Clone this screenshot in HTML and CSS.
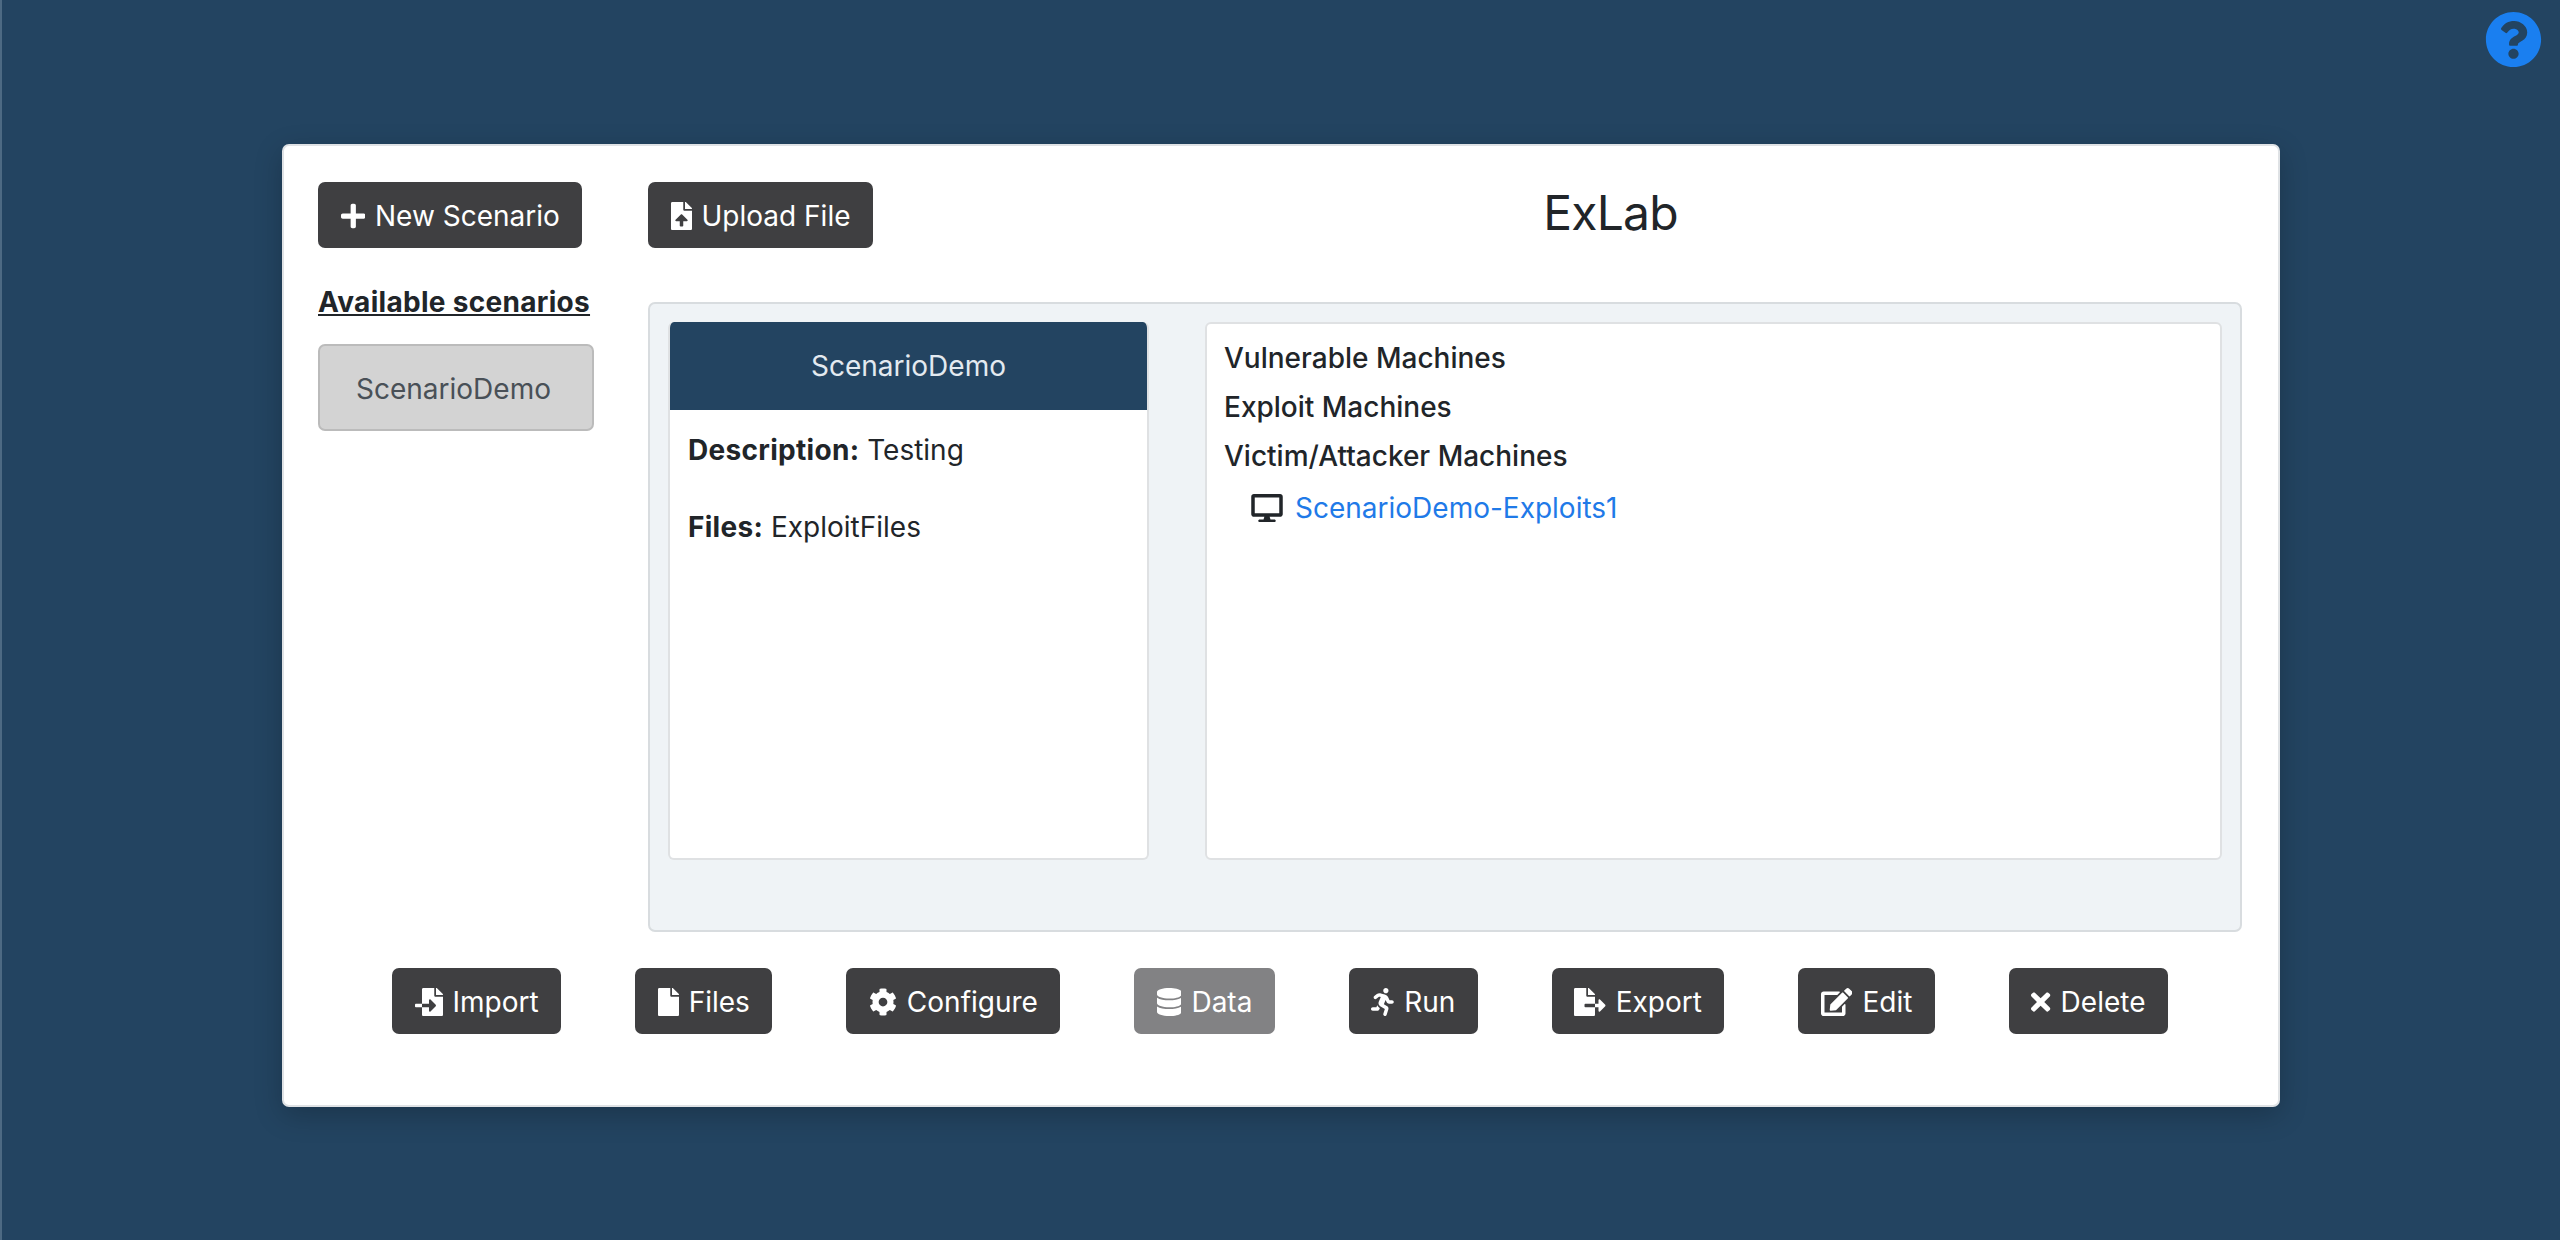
FILE: index.html
```html
<!DOCTYPE html>
<html lang="en">
<head>
    <meta charset="UTF-8">
    <title>ExLab</title>
    <link rel="stylesheet" href="styles.css">
</head>
<body>
    <a class="help" href="#">
        <svg viewBox="0 0 512 512"><path d="M504 256c0 136.997-111.043 248-248 248S8 392.997 8 256C8 119.083 119.043 8 256 8s248 111.083 248 248zM262.655 90c-54.497 0-89.255 22.957-116.549 63.758-3.536 5.286-2.353 12.415 2.715 16.258l34.699 26.31c5.205 3.947 12.621 3.008 16.665-2.122 17.864-22.658 30.113-35.797 57.303-35.797 20.429 0 45.698 13.148 45.698 32.958 0 14.976-12.363 22.667-32.534 33.976C247.128 238.528 216 254.941 216 296v4c0 6.627 5.373 12 12 12h56c6.627 0 12-5.373 12-12v-1.333c0-28.462 83.186-29.647 83.186-106.667 0-58.002-60.165-102-116.531-102zM256 338c-25.365 0-46 20.635-46 46 0 25.364 20.635 46 46 46s46-20.636 46-46c0-25.365-20.635-46-46-46z"/></svg>
    </a>

    <div class="main-card">
        <div class="columns">
            <div class="sidebar">
                <button class="btn" type="button">
                    <svg class="icon" viewBox="0 0 448 512"><path d="M416 208H272V64c0-17.67-14.33-32-32-32h-32c-17.67 0-32 14.33-32 32v144H32c-17.67 0-32 14.33-32 32v32c0 17.67 14.33 32 32 32h144v144c0 17.67 14.33 32 32 32h32c17.67 0 32-14.33 32-32V304h144c17.67 0 32-14.33 32-32v-32c0-17.67-14.33-32-32-32z"/></svg>
                    New Scenario
                </button>
                <h2 class="sidebar-title">Available scenarios</h2>
                <button class="scenario-btn" type="button">ScenarioDemo</button>
            </div>

            <div class="content">
                <div class="top-row">
                    <button class="btn" type="button">
                        <svg class="icon" viewBox="0 0 384 512"><path d="M224 136V0H24C10.7 0 0 10.7 0 24v464c0 13.3 10.7 24 24 24h336c13.3 0 24-10.7 24-24V160H248c-13.2 0-24-10.8-24-24zm65.18 216.01H224v80c0 8.84-7.16 16-16 16h-32c-8.84 0-16-7.16-16-16v-80H94.82c-14.28 0-21.41-17.29-11.27-27.36l96.42-95.7c6.65-6.61 17.39-6.61 24.04 0l96.42 95.7c10.15 10.07 3.03 27.36-11.25 27.36zM377 105L279.1 7c-4.5-4.5-10.6-7-17-7H256v128h128v-6.1c0-6.3-2.5-12.4-7-16.9z"/></svg>
                        Upload File
                    </button>
                    <h1 class="title">ExLab</h1>
                </div>

                <div class="panel">
                    <div class="info-card">
                        <div class="info-header">ScenarioDemo</div>
                        <div class="info-body">
                            <p><b>Description:</b> Testing</p>
                            <p><b>Files:</b> ExploitFiles</p>
                        </div>
                    </div>
                    <div class="machines-card">
                        <div class="machine-group">Vulnerable Machines</div>
                        <div class="machine-group">Exploit Machines</div>
                        <div class="machine-group">Victim/Attacker Machines</div>
                        <div class="machine-item">
                            <svg class="desktop" viewBox="0 0 576 512"><path d="M528 0H48C21.5 0 0 21.5 0 48v320c0 26.5 21.5 48 48 48h192l-16 48h-72c-13.3 0-24 10.7-24 24s10.7 24 24 24h272c13.3 0 24-10.7 24-24s-10.7-24-24-24h-72l-16-48h192c26.5 0 48-21.5 48-48V48c0-26.5-21.5-48-48-48zm-16 352H64V64h448v288z"/></svg>
                            <a href="#">ScenarioDemo-Exploits1</a>
                        </div>
                    </div>
                </div>
            </div>
        </div>

        <div class="actions">
            <button class="btn" type="button">
                <svg class="icon" viewBox="0 0 512 512"><path d="M16 288c-8.8 0-16 7.2-16 16v32c0 8.8 7.2 16 16 16h112v-64zm489-183L407.1 7c-4.5-4.5-10.6-7-17-7H384v128h128v-6.1c0-6.3-2.5-12.4-7-16.9zm-153 31V0H152c-13.3 0-24 10.7-24 24v264h128v-65.2c0-14.3 17.3-21.4 27.4-11.3L379 308c6.6 6.7 6.6 17.4 0 24l-95.7 96.4c-10.1 10.1-27.4 3-27.4-11.3V352H128v136c0 13.3 10.7 24 24 24h336c13.3 0 24-10.7 24-24V160H376c-13.2 0-24-10.8-24-24z"/></svg>
                Import
            </button>
            <button class="btn" type="button">
                <svg class="icon" viewBox="0 0 384 512"><path d="M224 136V0H24C10.7 0 0 10.7 0 24v464c0 13.3 10.7 24 24 24h336c13.3 0 24-10.7 24-24V160H248c-13.2 0-24-10.8-24-24zm160-14.1v6.1H256V0h6.1c6.4 0 12.5 2.5 17 7l97.9 98c4.5 4.5 7 10.6 7 16.9z"/></svg>
                Files
            </button>
            <button class="btn" type="button">
                <svg class="icon" viewBox="0 0 512 512"><path d="M487.4 315.7l-42.6-24.6c4.3-23.2 4.3-47 0-70.2l42.6-24.6c4.9-2.8 7.1-8.6 5.5-14-11.1-35.6-30-67.8-54.7-94.6-3.8-4.1-10-5.1-14.8-2.3L380.8 110c-17.9-15.4-38.5-27.3-60.8-35.1V25.8c0-5.6-3.9-10.5-9.4-11.7-36.7-8.2-74.3-7.8-109.2 0-5.5 1.2-9.4 6.1-9.4 11.7V75c-22.2 7.9-42.8 19.8-60.8 35.1L88.7 85.5c-4.9-2.8-11-1.9-14.8 2.3-24.7 26.7-43.6 58.9-54.7 94.6-1.7 5.4.6 11.2 5.5 14L67.3 221c-4.3 23.2-4.3 47 0 70.2l-42.6 24.6c-4.9 2.8-7.1 8.6-5.5 14 11.1 35.6 30 67.8 54.7 94.6 3.8 4.1 10 5.1 14.8 2.3l42.6-24.6c17.9 15.4 38.5 27.3 60.8 35.1v49.2c0 5.6 3.9 10.5 9.4 11.7 36.7 8.2 74.3 7.8 109.2 0 5.5-1.2 9.4-6.1 9.4-11.7v-49.2c22.2-7.9 42.8-19.8 60.8-35.1l42.6 24.6c4.9 2.8 11 1.9 14.8-2.3 24.7-26.7 43.6-58.9 54.7-94.6 1.5-5.5-.7-11.3-5.6-14.1zM256 336c-44.1 0-80-35.9-80-80s35.9-80 80-80 80 35.9 80 80-35.9 80-80 80z"/></svg>
                Configure
            </button>
            <button class="btn btn-disabled" type="button">
                <svg class="icon" viewBox="0 0 448 512"><path d="M448 73.143v45.714C448 159.143 347.667 192 224 192S0 159.143 0 118.857V73.143C0 32.857 100.333 0 224 0s224 32.857 224 73.143zM448 176v102.857C448 319.143 347.667 352 224 352S0 319.143 0 278.857V176c48.125 33.143 136.208 48.572 224 48.572S399.874 209.143 448 176zm0 160v102.857C448 479.143 347.667 512 224 512S0 479.143 0 438.857V336c48.125 33.143 136.208 48.572 224 48.572S399.874 369.143 448 336z"/></svg>
                Data
            </button>
            <button class="btn" type="button">
                <svg class="icon" viewBox="0 0 416 512"><path d="M272 96c26.51 0 48-21.49 48-48S298.51 0 272 0s-48 21.49-48 48 21.49 48 48 48zM113.69 317.47l-14.8 34.52H32c-17.67 0-32 14.33-32 32s14.33 32 32 32h77.45c19.25 0 36.58-11.44 44.11-29.09l8.79-20.52-10.67-6.3c-17.32-10.23-30.06-25.37-37.99-42.61zM384 223.99h-44.03l-26.06-53.25c-12.5-25.55-35.45-44.23-61.78-50.94l-71.08-21.14c-28.3-6.8-57.77-.55-80.84 17.14l-39.67 30.41c-14.03 10.75-16.69 30.83-5.92 44.86s30.84 16.66 44.86 5.92l39.69-30.41c7.67-5.89 17.44-8 25.27-6.14l14.7 4.37-37.46 87.39c-12.62 29.48-1.31 64.01 26.3 80.31l84.98 50.17-27.47 87.73c-5.28 16.86 4.11 34.81 20.97 40.09 3.19 1 6.41 1.48 9.58 1.48 13.61 0 26.23-8.77 30.52-22.45l31.64-101.06c5.91-20.77-2.89-43.08-21.64-54.39l-61.24-36.14 31.31-78.28 20.27 41.43c8 16.34 24.92 26.89 43.11 26.89H384c17.67 0 32-14.33 32-32s-14.33-31.99-32-31.99z"/></svg>
                Run
            </button>
            <button class="btn" type="button">
                <svg class="icon" viewBox="0 0 576 512"><path d="M384 121.9c0-6.3-2.5-12.4-7-16.9L279.1 7c-4.5-4.5-10.6-7-17-7H256v128h128zM571 308l-95.7-96.4c-10.1-10.1-27.4-3-27.4 11.3V288h-64v64h64v65.2c0 14.3 17.3 21.4 27.4 11.3L571 332c6.6-6.6 6.6-17.4 0-24zm-379 28v-32c0-8.8 7.2-16 16-16h176V160H248c-13.2 0-24-10.8-24-24V0H24C10.7 0 0 10.7 0 24v464c0 13.3 10.7 24 24 24h336c13.3 0 24-10.7 24-24V352H208c-8.8 0-16-7.2-16-16z"/></svg>
                Export
            </button>
            <button class="btn" type="button">
                <svg class="icon" viewBox="0 0 576 512"><path d="M402.6 83.2l90.2 90.2c3.8 3.8 3.8 10 0 13.8L274.4 405.6l-92.8 10.3c-12.4 1.4-22.9-9.1-21.5-21.5l10.3-92.8L388.8 83.2c3.8-3.8 10-3.8 13.8 0zm162-22.9l-48.8-48.8c-15.2-15.2-39.9-15.2-55.2 0l-35.4 35.4c-3.8 3.8-3.8 10 0 13.8l90.2 90.2c3.8 3.8 10 3.8 13.8 0l35.4-35.4c15.2-15.3 15.2-40 0-55.2zM384 346.2V448H64V128h229.8c3.2 0 6.2-1.3 8.5-3.5l40-40c7.6-7.6 2.2-20.5-8.5-20.5H48C21.5 64 0 85.5 0 112v352c0 26.5 21.5 48 48 48h352c26.5 0 48-21.5 48-48V306.2c0-10.7-12.9-16-20.5-8.5l-40 40c-2.2 2.3-3.5 5.3-3.5 8.5z"/></svg>
                Edit
            </button>
            <button class="btn" type="button">
                <svg class="icon" viewBox="0 0 352 512"><path d="M242.72 256l100.07-100.07c12.28-12.28 12.28-32.19 0-44.48l-22.24-22.24c-12.28-12.28-32.19-12.28-44.48 0L176 189.28 75.93 89.21c-12.28-12.28-32.19-12.28-44.48 0L9.21 111.45c-12.28 12.28-12.28 32.19 0 44.48L109.28 256 9.21 356.07c-12.28 12.28-12.28 32.19 0 44.48l22.24 22.24c12.28 12.28 32.2 12.28 44.48 0L176 322.72l100.07 100.07c12.28 12.28 32.2 12.28 44.48 0l22.24-22.24c12.28-12.28 12.28-32.19 0-44.48L242.72 256z"/></svg>
                Delete
            </button>
        </div>
    </div>
</body>
</html>
```

FILE: styles.css
```css
html, body {
    height: 100%;
}
body {
    margin: 0;
    padding-top: 144px;
    box-sizing: border-box;
    background-color: #234461;
    border-left: 2px solid #4d6a83;
    font-family: Inter, "Liberation Sans", sans-serif;
    font-size: 28px;
    line-height: 42px;
    color: #212529;
}
.help {
    position: absolute;
    top: 11px;
    right: 18px;
    width: 57px;
    height: 57px;
    fill: #1a7ff0;
}
.help svg {
    display: block;
    width: 100%;
    height: 100%;
}
.main-card {
    width: 1998px;
    height: 963px;
    margin: 0 auto;
    padding: 36px 36px 0 34px;
    box-sizing: border-box;
    background-color: #fff;
    border: 2px solid #dfe2e5;
    border-radius: 7px;
    box-shadow: 0 8px 28px rgba(0,0,0,0.22);
}
.columns {
    display: grid;
    grid-template-columns: 276px 1fr;
    column-gap: 54px;
}
.btn {
    display: inline-flex;
    align-items: center;
    gap: 10px;
    height: 66px;
    padding: 2px 22.5px 0;
    border: 0;
    border-radius: 7px;
    background-color: #3f3f41;
    color: #fff;
    font-family: inherit;
    font-size: 28px;
    white-space: nowrap;
}
.btn-disabled {
    background-color: #828284;
}
.icon {
    height: 28px;
    fill: currentColor;
    flex: none;
}
.sidebar-title {
    margin: 33px 0 0;
    font-size: 28px;
    font-weight: 700;
    line-height: 42px;
    letter-spacing: 0.3px;
    text-decoration: underline;
    white-space: nowrap;
}
.scenario-btn {
    display: block;
    width: 276px;
    height: 87px;
    margin-top: 21px;
    padding: 3px 5px 0 0;
    border: 2px solid #bbb;
    border-radius: 7px;
    background-color: #d3d3d3;
    color: #495057;
    font-family: inherit;
    font-size: 28px;
}
.top-row {
    display: flex;
    align-items: flex-start;
}
.title {
    flex: 1;
    margin: 0;
    padding-left: 106px;
    text-align: center;
    font-size: 48px;
    font-weight: 400;
    line-height: 62px;
    letter-spacing: -0.8px;
}
.panel {
    display: flex;
    gap: 56px;
    height: 630px;
    margin-top: 54px;
    padding: 18px 18px 0 18px;
    box-sizing: border-box;
    background-color: #eff3f6;
    border: 2px solid #d8dcdf;
    border-radius: 7px;
}
.info-card, .machines-card {
    height: 538px;
    box-sizing: border-box;
    background-color: #fff;
    border: 2px solid #dfe1e3;
    border-radius: 6px;
}
.info-card {
    width: 481px;
    flex: none;
    overflow: hidden;
    border-top: 0;
}
.info-header {
    height: 88px;
    background-color: #234461;
    color: #e3eaf0;
    font-size: 28px;
    line-height: 88px;
    text-align: center;
}
.info-body {
    padding: 19px 18px;
}
.info-body p {
    margin: 0 0 35px;
}
.info-body b {
    letter-spacing: 0.3px;
}
.machines-card {
    flex: 1;
    padding: 10px 17px;
}
.machine-group {
    font-weight: 500;
    line-height: 49px;
}
.machine-item {
    display: flex;
    align-items: center;
    gap: 12px;
    height: 54px;
    padding-left: 27px;
}
.desktop {
    width: 32px;
    height: 28px;
    fill: #212529;
}
.machine-item a {
    color: #1f7ae8;
    text-decoration: none;
}
.actions {
    display: flex;
    justify-content: center;
    gap: 74px;
    margin-top: 36px;
}
```
